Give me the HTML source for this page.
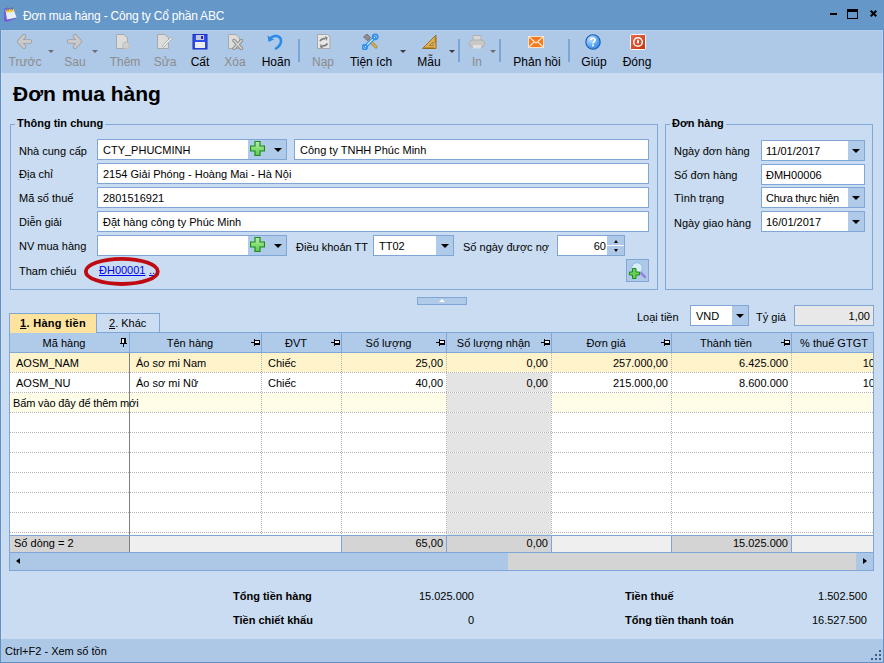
<!DOCTYPE html>
<html><head><meta charset="utf-8">
<style>
*{box-sizing:border-box;margin:0;padding:0}
html,body{width:884px;height:663px;overflow:hidden;background:#C9DCF1;font-family:"Liberation Sans",sans-serif;font-size:11px;color:#000}
.a{position:absolute}
.t{position:absolute;white-space:nowrap;line-height:13px;font-size:11px}
#title{left:0;top:0;width:884px;height:30px;background:#6597C8}
#tb{left:0;top:30px;width:884px;height:43px;background:#AEC8E7;border-top:1px solid #B6CFEB}
.tl{position:absolute;white-space:nowrap;font-size:12px;line-height:14px;top:55px;text-align:center;width:80px}
.dis{color:#8C8C8C}
.dd{position:absolute;top:50px;width:0;height:0;border-left:3px solid transparent;border-right:3px solid transparent;border-top:3px solid #3a3a3a}
.dd.g{border-top-color:#6d6d6d}
.sep{position:absolute;top:39px;width:2px;height:23px;background:#8DB0DC;border-right:1px solid #D0E0F2}
.gb{position:absolute;border:1px solid #7FA7D8}
.gt{position:absolute;font-weight:bold;background:#C9DCF1;padding:0 2px;line-height:13px;white-space:nowrap}
.tx{position:absolute;background:#fff;border:1px solid #7FA6D6;height:20px}
.tx span{position:absolute;left:5px;top:4px;line-height:13px;white-space:nowrap}
.btn{position:absolute;top:0;bottom:0;background:#B0CBEA}
.arr{position:absolute;left:50%;top:50%;margin-left:-4px;margin-top:-2px;width:0;height:0;border-left:4px solid transparent;border-right:4px solid transparent;border-top:4px solid #000}
</style></head><body>
<!-- title bar -->
<div id="title" class="a">
  <svg class="a" style="left:0;top:0" width="22" height="24" viewBox="0 0 22 24">
    <path d="M4 8.5 L12.5 8 L16 18.5 L6.5 22 L4 21 Z" fill="#6F5FD8"/>
    <path d="M5.5 10 L13.5 9 L16.5 17.5 L7 19.5 Z" fill="#E6F0FC"/>
    <path d="M5.5 10 L13.5 9 L14.3 11.5 L6.3 12.8 Z" fill="#F5CC48"/>
    <path d="M7 11 C5.8 7 8.8 6.3 8.5 10.5 M11 10.5 C9.8 6.5 12.8 6 12.5 10" stroke="#707070" stroke-width="0.9" fill="none"/>
  </svg>
  <div class="a" style="left:23px;top:9px;color:#fff;font-size:12px;line-height:14px;white-space:nowrap;letter-spacing:-0.2px">Đơn mua hàng - Công ty Cổ phần ABC</div>
  <div class="a" style="left:830px;top:13px;width:7px;height:2px;background:#000"></div>
  <div class="a" style="left:847px;top:9px;width:11px;height:10px;border:1px solid #000;border-top-width:3px"></div>
  <svg class="a" style="left:870px;top:10px" width="7" height="7" viewBox="0 0 7 7"><path d="M0.7 0.7 L6.3 6.3 M6.3 0.7 L0.7 6.3" stroke="#000" stroke-width="2"/></svg>
</div>
<!-- toolbar -->
<div id="tb" class="a"></div>
<div class="a" style="left:0;top:29px;width:884px;height:1px;background:#6093C6"></div>
<div class="a" style="left:0;top:30px;width:1px;height:633px;background:#5E90C8"></div>
<div class="a" style="left:883px;top:30px;width:1px;height:633px;background:#5E90C8"></div>
<div class="a" style="left:0;top:662px;width:884px;height:1px;background:#5E90C8"></div>
<div class="a" style="left:1px;top:30px;width:1px;height:632px;background:rgba(255,255,255,0.15)"></div>
<div class="a" style="left:882px;top:30px;width:1px;height:632px;background:rgba(255,255,255,0.15)"></div>


<!-- toolbar icons -->
<svg class="a" style="left:16px;top:33px" width="17" height="17" viewBox="0 0 17 17"><path d="M8 3.3 L3.3 8.5 L8 13.7 M4 8.5 H13.8" fill="none" stroke="#A0A0A0" stroke-width="4.6" stroke-linecap="round" stroke-linejoin="round"/><path d="M8 3.3 L3.3 8.5 L8 13.7 M4 8.5 H13.8" fill="none" stroke="#CACACA" stroke-width="2.8" stroke-linecap="round" stroke-linejoin="round"/></svg>
<svg class="a" style="left:66px;top:33px" width="17" height="17" viewBox="0 0 17 17"><path d="M9 3.3 L13.7 8.5 L9 13.7 M13 8.5 H3.2" fill="none" stroke="#A0A0A0" stroke-width="4.6" stroke-linecap="round" stroke-linejoin="round"/><path d="M9 3.3 L13.7 8.5 L9 13.7 M13 8.5 H3.2" fill="none" stroke="#CACACA" stroke-width="2.8" stroke-linecap="round" stroke-linejoin="round"/></svg>
<div class="dd g" style="left:48px"></div>
<div class="dd g" style="left:92px"></div>
<svg class="a" style="left:116px;top:34px" width="16" height="16" viewBox="0 0 16 16"><path d="M0.5 0.5 H8 L11.5 4 V14.5 H0.5 Z" fill="#DCDCDC" stroke="#A8A8A8"/><circle cx="10" cy="11.5" r="3.5" fill="#CFCFCF" stroke="#BDBDBD"/></svg>
<svg class="a" style="left:157px;top:34px" width="16" height="16" viewBox="0 0 16 16"><path d="M0.5 0.5 H8 L11.5 4 V14.5 H0.5 Z" fill="#DCDCDC" stroke="#A8A8A8"/><path d="M5 12 L14 3 L15.5 4.5 L6.5 13.5 Z" fill="#E8E8E8" stroke="#A8A8A8" stroke-width="0.8"/></svg>
<svg class="a" style="left:192px;top:34px" width="16" height="16" viewBox="0 0 16 16"><rect x="1" y="0.5" width="14" height="14.5" fill="#2E4FE8" stroke="#1A2FC0"/><rect x="4" y="1" width="8" height="5" fill="#C8C8D8"/><rect x="9" y="2" width="2" height="3" fill="#1A2FC0"/><rect x="3" y="8" width="10" height="6" fill="#EDEDED"/></svg>
<svg class="a" style="left:228px;top:34px" width="16" height="16" viewBox="0 0 16 16"><path d="M0.5 0.5 H8 L11.5 4 V14.5 H0.5 Z" fill="#DCDCDC" stroke="#A8A8A8"/><path d="M6 6.5 L13.5 14.5 M13.5 6.5 L6 14.5" stroke="#8E8E8E" stroke-width="3.4" stroke-linecap="round"/><path d="M6 6.5 L13.5 14.5 M13.5 6.5 L6 14.5" stroke="#D4D4D4" stroke-width="1.6" stroke-linecap="round"/></svg>
<svg class="a" style="left:267px;top:33px" width="16" height="17" viewBox="0 0 16 17"><path d="M3 6 C6 1.5 14 2 14 8 C14 11 12 13.5 9 15.5" fill="none" stroke="#2A8CE6" stroke-width="2.6" stroke-linecap="round"/><path d="M0.5 2.5 L1.5 9 L7 6.5 Z" fill="#2A8CE6"/></svg>
<div class="a" style="left:298px;top:39px;width:2px;height:23px;background:#7AA5D9"></div>
<svg class="a" style="left:317px;top:34px" width="14" height="16" viewBox="0 0 14 16"><path d="M0.5 0.5 H10.5 L13 3 V14.5 H0.5 Z" fill="#E6E6E6" stroke="#A8A8A8"/><path d="M3 7 Q5 3.8 8.3 4.8" fill="none" stroke="#7C7C7C" stroke-width="1.8"/><path d="M7.5 2.5 L10.5 3 L9.8 7 Z" fill="#7C7C7C"/><path d="M10.5 9.5 Q8.5 12.7 5.2 11.7" fill="none" stroke="#7C7C7C" stroke-width="1.8"/><path d="M6 14 L3 13.5 L3.7 9.5 Z" fill="#7C7C7C"/></svg>
<svg class="a" style="left:362px;top:33px" width="17" height="17" viewBox="0 0 17 17"><path d="M6 6 L14 14" stroke="#A0782A" stroke-width="3" stroke-linecap="round"/><path d="M6 6 L14 14" stroke="#E8B850" stroke-width="1.6" stroke-linecap="round"/><path d="M1.5 4 L5 1 L8.5 4.5 L5.5 7.5 Z" fill="#8C8C8C" stroke="#6A6A6A" stroke-width="0.8"/><path d="M3.5 13.5 L12.5 4.5" stroke="#2F8FE8" stroke-width="3.6" stroke-linecap="round"/><path d="M3.5 13.5 L12.5 4.5" stroke="#D6ECFF" stroke-width="1.2" stroke-linecap="round"/><circle cx="13.2" cy="3.8" r="2.6" fill="none" stroke="#2F8FE8" stroke-width="1.6"/><circle cx="2.8" cy="14.2" r="2.4" fill="none" stroke="#2F8FE8" stroke-width="1.6"/></svg>
<div class="dd" style="left:400px"></div>
<svg class="a" style="left:421px;top:34px" width="16" height="16" viewBox="0 0 16 16"><path d="M15 1 V14.5 H1.5 Z" fill="#E2AE48" stroke="#9A6E28" stroke-width="1" stroke-linejoin="round"/><path d="M12 8 V11.5 H8.5 Z" fill="#B0CBE8" stroke="#9A6E28" stroke-width="0.8"/><path d="M4 14.5 V13 M6 14.5 V13 M8 14.5 V13 M10 14.5 V13 M12 14.5 V13 M15 4 H13.5 M15 6 H13.5 M15 8 H13.5" stroke="#7A5418" stroke-width="0.7"/></svg>
<div class="dd" style="left:449px"></div>
<div class="a" style="left:458px;top:39px;width:2px;height:23px;background:#7AA5D9"></div>
<svg class="a" style="left:469px;top:35px" width="16" height="14" viewBox="0 0 16 14"><rect x="4" y="0.5" width="8" height="5" fill="#D8D8D8" stroke="#B0B0B0"/><rect x="0.5" y="5" width="15" height="7" rx="3" fill="#C8C8C8" stroke="#B0B0B0"/><rect x="4" y="10" width="8" height="3.5" fill="#E0E0E0"/></svg>
<div class="dd g" style="left:490px"></div>
<div class="a" style="left:499px;top:39px;width:2px;height:23px;background:#7AA5D9"></div>
<svg class="a" style="left:528px;top:36px" width="16" height="12" viewBox="0 0 16 12"><rect x="0.5" y="0.5" width="15" height="11" fill="#F47A20" stroke="#FBE0C8"/><path d="M1 1 L8 7 L15 1 M1 11 L6 6 M15 11 L10 6" stroke="#FFE8D0" stroke-width="1.1" fill="none"/></svg>
<div class="a" style="left:568px;top:39px;width:2px;height:23px;background:#7AA5D9"></div>
<svg class="a" style="left:585px;top:34px" width="16" height="16" viewBox="0 0 16 16"><defs><radialGradient id="hg" cx="0.35" cy="0.3" r="0.8"><stop offset="0" stop-color="#C4E4FF"/><stop offset="0.6" stop-color="#5AA6F0"/><stop offset="1" stop-color="#2F7FDC"/></radialGradient></defs><circle cx="8" cy="8" r="7.2" fill="url(#hg)" stroke="#1C5CB4" stroke-width="1.1"/><path d="M5.8 6 C5.8 3.6 10.2 3.6 10.2 6 C10.2 7.6 8 7.6 8 9.5" fill="none" stroke="#fff" stroke-width="1.6"/><rect x="7.1" y="10.6" width="1.8" height="1.8" fill="#fff"/></svg>
<svg class="a" style="left:630px;top:34px" width="16" height="16" viewBox="0 0 16 16"><defs><linearGradient id="rg" x1="0" y1="0" x2="1" y2="1"><stop offset="0" stop-color="#EE6A48"/><stop offset="1" stop-color="#C8300E"/></linearGradient></defs><rect x="0.5" y="0.5" width="15" height="15" rx="1" fill="url(#rg)" stroke="#FFFFFF" stroke-width="1"/><circle cx="8" cy="8" r="4.3" fill="none" stroke="#fff" stroke-width="1.5"/><rect x="7.1" y="5.8" width="1.8" height="3.6" fill="#fff"/></svg>
<!-- toolbar labels -->
<div class="tl dis" style="left:-15px">Trước</div>
<div class="tl dis" style="left:35px">Sau</div>
<div class="tl dis" style="left:85px">Thêm</div>
<div class="tl dis" style="left:125px">Sửa</div>
<div class="tl" style="left:160px">Cất</div>
<div class="tl dis" style="left:195px">Xóa</div>
<div class="tl" style="left:236px">Hoãn</div>
<div class="tl dis" style="left:283px">Nạp</div>
<div class="tl" style="left:331px">Tiện ích</div>
<div class="tl" style="left:389px">Mẫu</div>
<div class="tl dis" style="left:437px">In</div>
<div class="tl" style="left:497px">Phản hồi</div>
<div class="tl" style="left:554px">Giúp</div>
<div class="tl" style="left:597px">Đóng</div>

<!-- heading -->
<div class="a" style="left:13px;top:82px;font-size:21px;font-weight:bold;line-height:24px;white-space:nowrap">Đơn mua hàng</div>
<!-- group 1 -->
<div class="gb" style="left:10px;top:124px;width:648px;height:166px"></div>
<div class="gt" style="left:15px;top:117px">Thông tin chung</div>
<div class="t" style="left:19px;top:145px">Nhà cung cấp</div>
<div class="t" style="left:19px;top:168px">Địa chỉ</div>
<div class="t" style="left:19px;top:192px">Mã số thuế</div>
<div class="t" style="left:19px;top:216px">Diễn giải</div>
<div class="t" style="left:19px;top:240px">NV mua hàng</div>
<div class="t" style="left:19px;top:265px">Tham chiếu</div>

<div class="tx" style="left:97px;top:139px;width:190px;height:21px"><span>CTY_PHUCMINH</span><div class="btn" style="left:150px;right:0"></div></div>
<div class="tx" style="left:294px;top:139px;width:355px;height:21px"><span>Công ty TNHH Phúc Minh</span></div>
<div class="tx" style="left:97px;top:163px;width:552px;height:21px"><span>2154 Giải Phóng - Hoàng Mai - Hà Nội</span></div>
<div class="tx" style="left:97px;top:187px;width:552px;height:21px"><span>2801516921</span></div>
<div class="tx" style="left:97px;top:211px;width:552px;height:21px"><span>Đặt hàng công ty Phúc Minh</span></div>
<div class="tx" style="left:97px;top:235px;width:190px;height:21px"><div class="btn" style="left:150px;right:0"></div></div>

<svg class="a" style="left:250px;top:141px" width="15" height="15" viewBox="0 0 15 15"><defs><linearGradient id="pg1" x1="0" y1="0" x2="0" y2="1"><stop offset="0" stop-color="#B8F0A8"/><stop offset="1" stop-color="#5CC84A"/></linearGradient></defs><path d="M5 0.5 H10 V5 H14.5 V10 H10 V14.5 H5 V10 H0.5 V5 H5 Z" fill="url(#pg1)" stroke="#1A8C1A" stroke-width="1.2"/></svg>
<div class="a" style="left:274px;top:148px;width:0;height:0;border-left:4px solid transparent;border-right:4px solid transparent;border-top:4px solid #000"></div>
<svg class="a" style="left:250px;top:237px" width="15" height="15" viewBox="0 0 15 15"><defs><linearGradient id="pg2" x1="0" y1="0" x2="0" y2="1"><stop offset="0" stop-color="#B8F0A8"/><stop offset="1" stop-color="#5CC84A"/></linearGradient></defs><path d="M5 0.5 H10 V5 H14.5 V10 H10 V14.5 H5 V10 H0.5 V5 H5 Z" fill="url(#pg2)" stroke="#1A8C1A" stroke-width="1.2"/></svg>
<div class="a" style="left:274px;top:244px;width:0;height:0;border-left:4px solid transparent;border-right:4px solid transparent;border-top:4px solid #000"></div>
<div class="t" style="left:296px;top:241px">Điều khoản TT</div>
<div class="tx" style="left:373px;top:235px;width:81px;height:21px"><span>TT02</span><div class="btn" style="left:62px;right:0"><div class="arr"></div></div></div>
<div class="t" style="left:463px;top:241px">Số ngày được nợ</div>
<div class="tx" style="left:557px;top:235px;width:68px;height:21px"><span style="left:auto;right:18px">60</span><div class="btn" style="left:49px;right:0;background:#AEC8E8"></div><div class="a" style="left:49px;top:9px;width:17px;height:1px;background:#fff"></div>
<div class="a" style="left:56px;top:4px;width:0;height:0;border-left:2.5px solid transparent;border-right:2.5px solid transparent;border-bottom:3px solid #000"></div>
<div class="a" style="left:56px;top:13px;width:0;height:0;border-left:2.5px solid transparent;border-right:2.5px solid transparent;border-top:3px solid #000"></div></div>

<div class="t" style="left:99px;top:264px;color:#0000F0;text-decoration:underline">ĐH00001</div>
<div class="t" style="left:149px;top:264px;color:#0000F0;text-decoration:underline">..</div>
<svg class="a" style="left:83px;top:256px" width="78" height="31" viewBox="0 0 78 31"><ellipse cx="38.8" cy="15.4" rx="36" ry="12.6" fill="none" stroke="#BF0A12" stroke-width="3.8"/></svg>
<div class="a" style="left:626px;top:259px;width:23px;height:23px;background:#AEC8E8;border:1px solid #7FA6D6"></div>
<svg class="a" style="left:629px;top:262px" width="18" height="18" viewBox="0 0 18 18"><path d="M11 10 L16 15" stroke="#9A7FE0" stroke-width="2.6" stroke-linecap="round"/><circle cx="8" cy="6" r="5.3" fill="#D8ECFA" stroke="#8EC0EA" stroke-width="1"/><path d="M3.5 6.5 H7 V10 H10.5 V13 H7 V16.5 H3.5 V13 H0.5 V10 H3.5 Z" fill="#6CCF5A" stroke="#1A8C1A" stroke-width="1"/></svg>

<!-- group 2 -->
<div class="gb" style="left:665px;top:124px;width:208px;height:166px"></div>
<div class="gt" style="left:670px;top:117px">Đơn hàng</div>
<div class="t" style="left:674px;top:145px">Ngày đơn hàng</div>
<div class="t" style="left:674px;top:169px">Số đơn hàng</div>
<div class="t" style="left:674px;top:192px">Tình trạng</div>
<div class="t" style="left:674px;top:217px">Ngày giao hàng</div>
<div class="tx" style="left:761px;top:140px;width:104px;height:21px"><span style="left:4px">11/01/2017</span><div class="btn" style="left:86px;right:0"><div class="arr"></div></div></div>
<div class="tx" style="left:761px;top:164px;width:104px;height:21px"><span style="left:4px">ĐMH00006</span></div>
<div class="tx" style="left:761px;top:187px;width:104px;height:21px"><span style="left:4px;letter-spacing:-0.25px">Chưa thực hiện</span><div class="btn" style="left:86px;right:0"><div class="arr"></div></div></div>
<div class="tx" style="left:761px;top:211px;width:104px;height:21px"><span style="left:4px">16/01/2017</span><div class="btn" style="left:86px;right:0"><div class="arr"></div></div></div>

<div class="a" style="left:417px;top:297px;width:50px;height:8px;background:#B0CBEA;border:1px solid #7FA6D6"></div>
<div class="a" style="left:439px;top:299px;width:0;height:0;border-left:3px solid transparent;border-right:3px solid transparent;border-bottom:3px solid #fff"></div>
<div class="t" style="left:637px;top:311px">Loại tiền</div>
<div class="tx" style="left:690px;top:305px;width:59px;height:21px"><span>VND</span><div class="btn" style="left:41px;right:0"><div class="arr"></div></div></div>
<div class="t" style="left:756px;top:311px">Tỷ giá</div>
<div class="tx" style="left:794px;top:305px;width:80px;height:21px;background:#E8E8E8"><span style="left:auto;right:3px">1,00</span></div>
<div class="a" style="left:9px;top:332px;width:865px;height:239px;background:#fff;border:1px solid #7FA6D6;overflow:hidden">
<div class="a" style="left:0;top:0;width:864px;height:20px;background:#B0CBEA;border-bottom:1px solid #7FA6D6"></div>
<div class="a" style="left:119px;top:0;width:1px;height:20px;background:#7FA6D6"></div>
<div class="t" style="left:0px;top:4px;width:108px;text-align:center">Mã hàng</div>
<div class="a" style="left:111px;top:5px;width:5px;height:1px;background:#000"></div><div class="a" style="left:111px;top:5px;width:1px;height:5px;background:#000"></div><div class="a" style="left:114px;top:5px;width:2px;height:5px;background:#000"></div><div class="a" style="left:110px;top:10px;width:7px;height:1px;background:#000"></div><div class="a" style="left:113px;top:11px;width:1px;height:3px;background:#000"></div><div class="a" style="left:112px;top:6px;width:2px;height:4px;background:#F2F2F2"></div>
<div class="a" style="left:251px;top:0;width:1px;height:20px;background:#7FA6D6"></div>
<div class="t" style="left:120px;top:4px;width:120px;text-align:center">Tên hàng</div>
<div class="a" style="left:241px;top:9px;width:3px;height:1px;background:#000"></div><div class="a" style="left:244px;top:6px;width:1px;height:7px;background:#000"></div><div class="a" style="left:245px;top:7px;width:5px;height:1px;background:#000"></div><div class="a" style="left:245px;top:10px;width:5px;height:2px;background:#000"></div><div class="a" style="left:249px;top:7px;width:1px;height:5px;background:#000"></div><div class="a" style="left:245px;top:8px;width:4px;height:2px;background:#F2F2F2"></div>
<div class="a" style="left:331px;top:0;width:1px;height:20px;background:#7FA6D6"></div>
<div class="t" style="left:252px;top:4px;width:68px;text-align:center">ĐVT</div>
<div class="a" style="left:321px;top:9px;width:3px;height:1px;background:#000"></div><div class="a" style="left:324px;top:6px;width:1px;height:7px;background:#000"></div><div class="a" style="left:325px;top:7px;width:5px;height:1px;background:#000"></div><div class="a" style="left:325px;top:10px;width:5px;height:2px;background:#000"></div><div class="a" style="left:329px;top:7px;width:1px;height:5px;background:#000"></div><div class="a" style="left:325px;top:8px;width:4px;height:2px;background:#F2F2F2"></div>
<div class="a" style="left:436px;top:0;width:1px;height:20px;background:#7FA6D6"></div>
<div class="t" style="left:332px;top:4px;width:93px;text-align:center">Số lượng</div>
<div class="a" style="left:426px;top:9px;width:3px;height:1px;background:#000"></div><div class="a" style="left:429px;top:6px;width:1px;height:7px;background:#000"></div><div class="a" style="left:430px;top:7px;width:5px;height:1px;background:#000"></div><div class="a" style="left:430px;top:10px;width:5px;height:2px;background:#000"></div><div class="a" style="left:434px;top:7px;width:1px;height:5px;background:#000"></div><div class="a" style="left:430px;top:8px;width:4px;height:2px;background:#F2F2F2"></div>
<div class="a" style="left:541px;top:0;width:1px;height:20px;background:#7FA6D6"></div>
<div class="t" style="left:437px;top:4px;width:93px;text-align:center">Số lượng nhận</div>
<div class="a" style="left:531px;top:9px;width:3px;height:1px;background:#000"></div><div class="a" style="left:534px;top:6px;width:1px;height:7px;background:#000"></div><div class="a" style="left:535px;top:7px;width:5px;height:1px;background:#000"></div><div class="a" style="left:535px;top:10px;width:5px;height:2px;background:#000"></div><div class="a" style="left:539px;top:7px;width:1px;height:5px;background:#000"></div><div class="a" style="left:535px;top:8px;width:4px;height:2px;background:#F2F2F2"></div>
<div class="a" style="left:661px;top:0;width:1px;height:20px;background:#7FA6D6"></div>
<div class="t" style="left:542px;top:4px;width:108px;text-align:center">Đơn giá</div>
<div class="a" style="left:651px;top:9px;width:3px;height:1px;background:#000"></div><div class="a" style="left:654px;top:6px;width:1px;height:7px;background:#000"></div><div class="a" style="left:655px;top:7px;width:5px;height:1px;background:#000"></div><div class="a" style="left:655px;top:10px;width:5px;height:2px;background:#000"></div><div class="a" style="left:659px;top:7px;width:1px;height:5px;background:#000"></div><div class="a" style="left:655px;top:8px;width:4px;height:2px;background:#F2F2F2"></div>
<div class="a" style="left:781px;top:0;width:1px;height:20px;background:#7FA6D6"></div>
<div class="t" style="left:662px;top:4px;width:108px;text-align:center">Thành tiền</div>
<div class="a" style="left:771px;top:9px;width:3px;height:1px;background:#000"></div><div class="a" style="left:774px;top:6px;width:1px;height:7px;background:#000"></div><div class="a" style="left:775px;top:7px;width:5px;height:1px;background:#000"></div><div class="a" style="left:775px;top:10px;width:5px;height:2px;background:#000"></div><div class="a" style="left:779px;top:7px;width:1px;height:5px;background:#000"></div><div class="a" style="left:775px;top:8px;width:4px;height:2px;background:#F2F2F2"></div>
<div class="a" style="left:863px;top:0;width:1px;height:20px;background:#7FA6D6"></div>
<div class="t" style="left:782px;top:4px;width:84px;text-align:center">% thuế GTGT</div>
<div class="a" style="left:0;top:20px;width:864px;height:20px;background:#FFF3CC"></div>
<div class="a" style="left:0;top:40px;width:864px;height:20px;background:#FFFFFF"></div>
<div class="a" style="left:0;top:60px;width:864px;height:20px;background:#FFFDE8"></div>
<div class="a" style="left:437px;top:40px;width:104px;height:163px;background:#E4E4E4"></div>
<div class="a" style="left:0;top:39px;width:864px;height:1px;background:repeating-linear-gradient(90deg,#B4B4B4 0 1px,#fff 1px 2px)"></div>
<div class="a" style="left:0;top:59px;width:864px;height:1px;background:repeating-linear-gradient(90deg,#B4B4B4 0 1px,#fff 1px 2px)"></div>
<div class="a" style="left:0;top:79px;width:864px;height:1px;background:repeating-linear-gradient(90deg,#B4B4B4 0 1px,#fff 1px 2px)"></div>
<div class="a" style="left:0;top:99px;width:864px;height:1px;background:repeating-linear-gradient(90deg,#B4B4B4 0 1px,#fff 1px 2px)"></div>
<div class="a" style="left:0;top:119px;width:864px;height:1px;background:repeating-linear-gradient(90deg,#B4B4B4 0 1px,#fff 1px 2px)"></div>
<div class="a" style="left:0;top:139px;width:864px;height:1px;background:repeating-linear-gradient(90deg,#B4B4B4 0 1px,#fff 1px 2px)"></div>
<div class="a" style="left:0;top:159px;width:864px;height:1px;background:repeating-linear-gradient(90deg,#B4B4B4 0 1px,#fff 1px 2px)"></div>
<div class="a" style="left:0;top:179px;width:864px;height:1px;background:repeating-linear-gradient(90deg,#B4B4B4 0 1px,#fff 1px 2px)"></div>
<div class="a" style="left:0;top:199px;width:864px;height:1px;background:repeating-linear-gradient(90deg,#B4B4B4 0 1px,#fff 1px 2px)"></div>
<div class="a" style="left:251px;top:20px;width:1px;height:182px;background:repeating-linear-gradient(180deg,#B4B4B4 0 1px,transparent 1px 2px)"></div>
<div class="a" style="left:331px;top:20px;width:1px;height:182px;background:repeating-linear-gradient(180deg,#B4B4B4 0 1px,transparent 1px 2px)"></div>
<div class="a" style="left:436px;top:20px;width:1px;height:182px;background:repeating-linear-gradient(180deg,#B4B4B4 0 1px,transparent 1px 2px)"></div>
<div class="a" style="left:541px;top:20px;width:1px;height:182px;background:repeating-linear-gradient(180deg,#B4B4B4 0 1px,transparent 1px 2px)"></div>
<div class="a" style="left:661px;top:20px;width:1px;height:182px;background:repeating-linear-gradient(180deg,#B4B4B4 0 1px,transparent 1px 2px)"></div>
<div class="a" style="left:781px;top:20px;width:1px;height:182px;background:repeating-linear-gradient(180deg,#B4B4B4 0 1px,transparent 1px 2px)"></div>
<div class="a" style="left:863px;top:20px;width:1px;height:182px;background:repeating-linear-gradient(180deg,#B4B4B4 0 1px,transparent 1px 2px)"></div>
<div class="a" style="left:119px;top:20px;width:1px;height:183px;background:#808080"></div>
<div class="t" style="left:6px;top:24px">AOSM_NAM</div>
<div class="t" style="left:126px;top:24px">Áo sơ mi Nam</div>
<div class="t" style="left:258px;top:24px">Chiếc</div>
<div class="t" style="left:332px;top:24px;width:101px;text-align:right">25,00</div>
<div class="t" style="left:437px;top:24px;width:101px;text-align:right">0,00</div>
<div class="t" style="left:542px;top:24px;width:116px;text-align:right">257.000,00</div>
<div class="t" style="left:662px;top:24px;width:116px;text-align:right">6.425.000</div>
<div class="t" style="left:782px;top:24px;width:83px;text-align:right">10</div>
<div class="t" style="left:6px;top:44px">AOSM_NU</div>
<div class="t" style="left:126px;top:44px">Áo sơ mi Nữ</div>
<div class="t" style="left:258px;top:44px">Chiếc</div>
<div class="t" style="left:332px;top:44px;width:101px;text-align:right">40,00</div>
<div class="t" style="left:437px;top:44px;width:101px;text-align:right">0,00</div>
<div class="t" style="left:542px;top:44px;width:116px;text-align:right">215.000,00</div>
<div class="t" style="left:662px;top:44px;width:116px;text-align:right">8.600.000</div>
<div class="t" style="left:782px;top:44px;width:83px;text-align:right">10</div>
<div class="t" style="left:3px;top:64px;letter-spacing:-0.15px">Bấm vào đây để thêm mới</div>
<div class="a" style="left:0;top:202px;width:864px;height:17px;background:#EFEFEF;border-top:1px solid #7FA6D6"></div>
<div class="a" style="left:0;top:203px;width:120px;height:16px;background:#D4D4D4;border-right:1px solid #808080"></div>
<div class="a" style="left:331px;top:202px;width:106px;height:17px;background:#D4D4D4;border:1px solid #7FA6D6;border-bottom:none"></div>
<div class="t" style="left:331px;top:204px;width:102px;text-align:right">65,00</div>
<div class="a" style="left:436px;top:202px;width:106px;height:17px;background:#D4D4D4;border:1px solid #7FA6D6;border-bottom:none"></div>
<div class="t" style="left:436px;top:204px;width:102px;text-align:right">0,00</div>
<div class="a" style="left:661px;top:202px;width:121px;height:17px;background:#D4D4D4;border:1px solid #7FA6D6;border-bottom:none"></div>
<div class="t" style="left:661px;top:204px;width:117px;text-align:right">15.025.000</div>
<div class="t" style="left:4px;top:204px">Số dòng = 2</div>
<div class="a" style="left:0;top:219px;width:864px;height:18px;background:#ADC8E6;border-top:1px solid #7FA6D6"></div>
<div class="a" style="left:498px;top:220px;width:348px;height:17px;background:#D4D4D4"></div>
<div class="a" style="left:6px;top:225px;width:0;height:0;border-top:3.5px solid transparent;border-bottom:3.5px solid transparent;border-right:4px solid #000"></div>
<div class="a" style="left:853px;top:225px;width:0;height:0;border-top:3.5px solid transparent;border-bottom:3.5px solid transparent;border-left:4px solid #000"></div>
</div>
<div class="a" style="left:9px;top:313px;width:88px;height:20px;background:#FDE39E;border:1px solid #7FA6D6;border-bottom:none"></div>
<div class="a" style="left:20px;top:317px;font-weight:bold;line-height:13px;white-space:nowrap;letter-spacing:0.3px"><u>1</u>. Hàng tiền</div>
<div class="a" style="left:96px;top:313px;width:64px;height:20px;background:#CCDDF2;border:1px solid #7FA6D6"></div>
<div class="a" style="left:109px;top:317px;line-height:13px;white-space:nowrap"><u>2</u>. Khác</div>
<div class="t" style="left:233px;top:590px;font-weight:bold">Tổng tiền hàng</div>
<div class="t" style="left:380px;top:590px;width:94px;text-align:right">15.025.000</div>
<div class="t" style="left:233px;top:614px;font-weight:bold">Tiền chiết khấu</div>
<div class="t" style="left:380px;top:614px;width:94px;text-align:right">0</div>
<div class="t" style="left:625px;top:590px;font-weight:bold">Tiền thuế</div>
<div class="t" style="left:760px;top:590px;width:107px;text-align:right">1.502.500</div>
<div class="t" style="left:625px;top:614px;font-weight:bold">Tổng tiền thanh toán</div>
<div class="t" style="left:760px;top:614px;width:107px;text-align:right">16.527.500</div>
<div class="a" style="left:1px;top:639px;width:882px;height:23px;background:#ADC8E6"></div>
<div class="t" style="left:5px;top:645px">Ctrl+F2 - Xem số tồn</div>
<div class="a" style="left:879px;top:650px;width:2px;height:2px;background:#3F5F8A"></div>
<div class="a" style="left:875px;top:654px;width:2px;height:2px;background:#3F5F8A"></div>
<div class="a" style="left:879px;top:654px;width:2px;height:2px;background:#3F5F8A"></div>
<div class="a" style="left:871px;top:658px;width:2px;height:2px;background:#3F5F8A"></div>
<div class="a" style="left:875px;top:658px;width:2px;height:2px;background:#3F5F8A"></div>
<div class="a" style="left:879px;top:658px;width:2px;height:2px;background:#3F5F8A"></div>
</body></html>
